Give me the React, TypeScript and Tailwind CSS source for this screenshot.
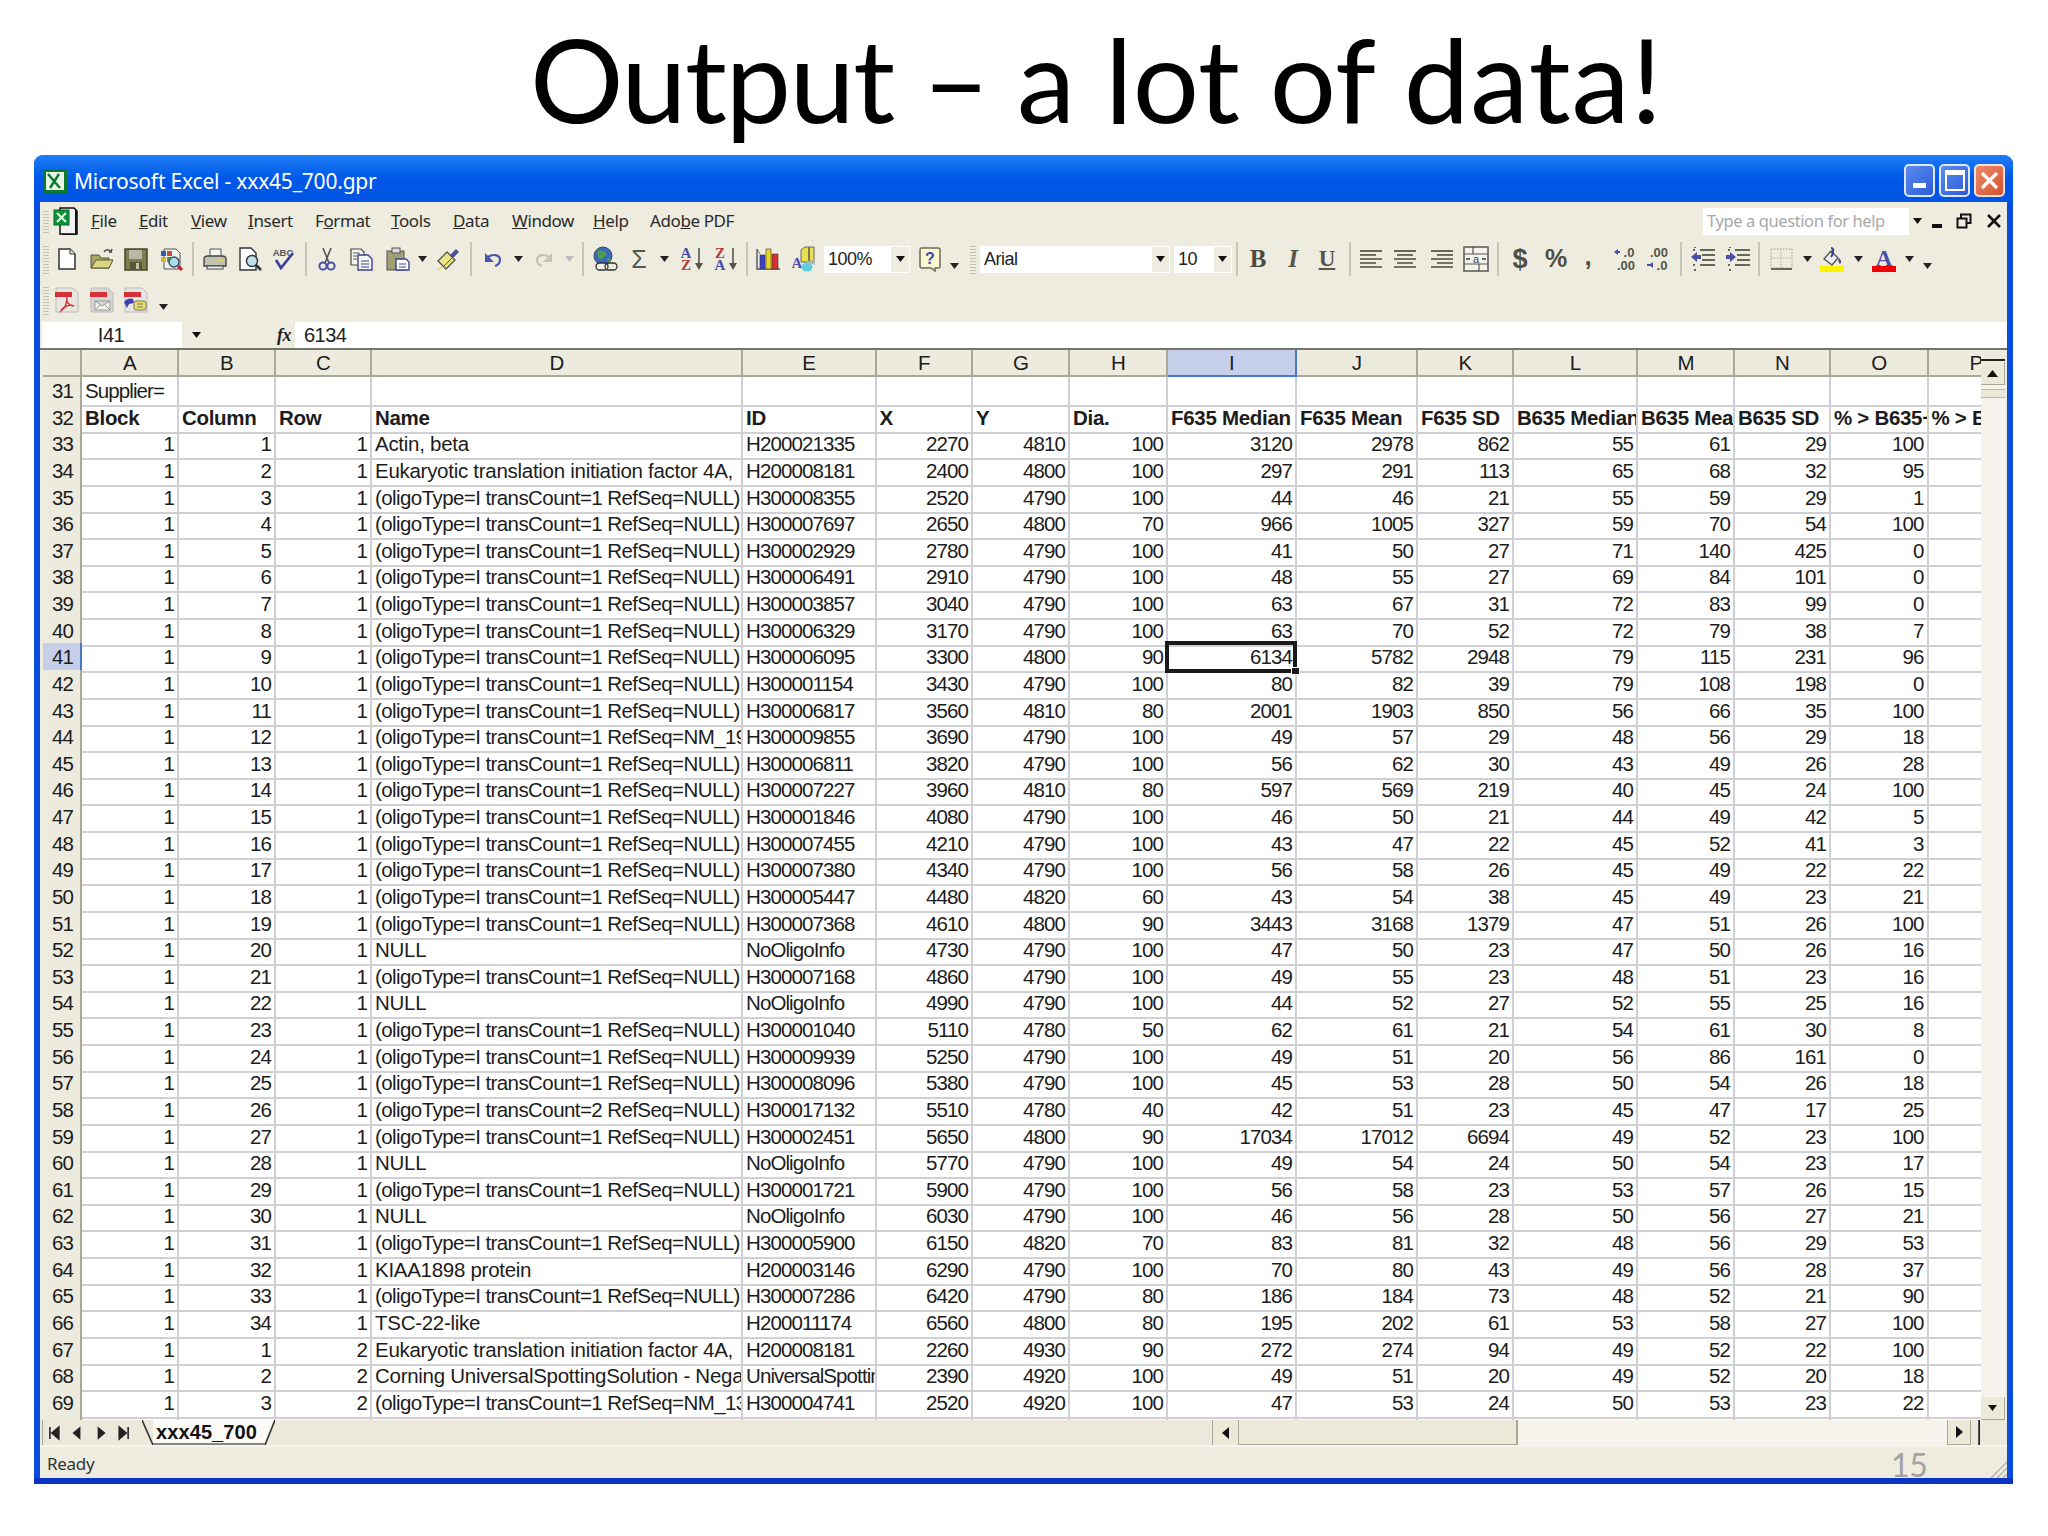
import React from "react";

const COLS = "grid grid-cols-[39px_97px_97px_96px_371px_133.5px_96.5px_97px_98px_129px_121px_96px_124px_97px_96px_97.5px_97px]";
const OL = "(oligoType=I transCount=1 RefSeq=NULL)";
const NM = "(oligoType=I transCount=1 RefSeq=NM_194603";
const EU = "Eukaryotic translation initiation factor 4A,";
const heads = ["A","B","C","D","E","F","G","H","I","J","K","L","M","N","O","P"];
const labels = ["Block","Column","Row","Name","ID","X","Y","Dia.","F635 Median","F635 Mean","F635 SD","B635 Median","B635 Mean","B635 SD","% > B635+1SD","% > B635+2SD"];

type R = [number, number, string, string, ...number[]];
const raw: R[] = [
  [1,1,"Actin, beta","H200021335",2270,4810,100,3120,2978,862,55,61,29,100],
  [2,1,EU,"H200008181",2400,4800,100,297,291,113,65,68,32,95],
  [3,1,OL,"H300008355",2520,4790,100,44,46,21,55,59,29,1],
  [4,1,OL,"H300007697",2650,4800,70,966,1005,327,59,70,54,100],
  [5,1,OL,"H300002929",2780,4790,100,41,50,27,71,140,425,0],
  [6,1,OL,"H300006491",2910,4790,100,48,55,27,69,84,101,0],
  [7,1,OL,"H300003857",3040,4790,100,63,67,31,72,83,99,0],
  [8,1,OL,"H300006329",3170,4790,100,63,70,52,72,79,38,7],
  [9,1,OL,"H300006095",3300,4800,90,6134,5782,2948,79,115,231,96],
  [10,1,OL,"H300001154",3430,4790,100,80,82,39,79,108,198,0],
  [11,1,OL,"H300006817",3560,4810,80,2001,1903,850,56,66,35,100],
  [12,1,NM,"H300009855",3690,4790,100,49,57,29,48,56,29,18],
  [13,1,OL,"H300006811",3820,4790,100,56,62,30,43,49,26,28],
  [14,1,OL,"H300007227",3960,4810,80,597,569,219,40,45,24,100],
  [15,1,OL,"H300001846",4080,4790,100,46,50,21,44,49,42,5],
  [16,1,OL,"H300007455",4210,4790,100,43,47,22,45,52,41,3],
  [17,1,OL,"H300007380",4340,4790,100,56,58,26,45,49,22,22],
  [18,1,OL,"H300005447",4480,4820,60,43,54,38,45,49,23,21],
  [19,1,OL,"H300007368",4610,4800,90,3443,3168,1379,47,51,26,100],
  [20,1,"NULL","NoOligoInfo",4730,4790,100,47,50,23,47,50,26,16],
  [21,1,OL,"H300007168",4860,4790,100,49,55,23,48,51,23,16],
  [22,1,"NULL","NoOligoInfo",4990,4790,100,44,52,27,52,55,25,16],
  [23,1,OL,"H300001040",5110,4780,50,62,61,21,54,61,30,8],
  [24,1,OL,"H300009939",5250,4790,100,49,51,20,56,86,161,0],
  [25,1,OL,"H300008096",5380,4790,100,45,53,28,50,54,26,18],
  [26,1,"(oligoType=I transCount=2 RefSeq=NULL)","H300017132",5510,4780,40,42,51,23,45,47,17,25],
  [27,1,OL,"H300002451",5650,4800,90,17034,17012,6694,49,52,23,100],
  [28,1,"NULL","NoOligoInfo",5770,4790,100,49,54,24,50,54,23,17],
  [29,1,OL,"H300001721",5900,4790,100,56,58,23,53,57,26,15],
  [30,1,"NULL","NoOligoInfo",6030,4790,100,46,56,28,50,56,27,21],
  [31,1,OL,"H300005900",6150,4820,70,83,81,32,48,56,29,53],
  [32,1,"KIAA1898 protein","H200003146",6290,4790,100,70,80,43,49,56,28,37],
  [33,1,OL,"H300007286",6420,4790,80,186,184,73,48,52,21,90],
  [34,1,"TSC-22-like","H200011174",6560,4800,80,195,202,61,53,58,27,100],
  [1,2,EU,"H200008181",2260,4930,90,272,274,94,49,52,22,100],
  [2,2,"Corning UniversalSpottingSolution - Negative","UniversalSpottingSolution",2390,4920,100,49,51,20,49,52,20,18],
  [3,2,"(oligoType=I transCount=1 RefSeq=NM_139049","H300004741",2520,4920,100,47,53,24,50,53,23,22],
];

const S = ({ children }: { children: React.ReactNode }) => (
  <svg width="26" height="26" viewBox="0 0 26 26" className="shrink-0 overflow-visible">{children}</svg>
);
const Tx = (p: { x: number; y: number; s: number; c: string; w?: number; f?: string; i?: boolean; children: React.ReactNode }) => (
  <text x={p.x} y={p.y} fontSize={p.s} fill={p.c} fontWeight={p.w ?? 400} fontFamily={p.f ?? "'Liberation Sans', sans-serif"} fontStyle={p.i ? "italic" : "normal"} textAnchor="middle">{p.children}</text>
);

const IconNew = () => <S><path d="M5 3h11l5 5v15H5z" fill="#fff" stroke="#333" strokeWidth="1.5" /><path d="M16 3v5h5" fill="#ddd" stroke="#333" /></S>;
const IconOpen = () => <S><path d="M2 22V9h8l2 3h8v10z" fill="#a8a763" stroke="#55552c" /><path d="M2 22l5-8h17l-4 8z" fill="#d9d583" stroke="#55552c" /><path d="M15 6c2-3 5-3 7 0l-2 0M22 6l1-3" fill="none" stroke="#444" strokeWidth="1.4" /></S>;
const IconSave = () => <S><rect x="2" y="3" width="22" height="21" fill="#7d7e4c" stroke="#44452a" strokeWidth="1.5" /><rect x="6" y="4" width="13" height="9" fill="#b8b8a8" /><rect x="7" y="16" width="12" height="8" fill="#55563a" /><rect x="13" y="17" width="3" height="6" fill="#c4c4a4" /></S>;
const IconPerm = () => <S><path d="M5 3h12l4 4v16H5z" fill="#f4f4ee" stroke="#555" /><rect x="2" y="5" width="5" height="5" fill="#3059b5" /><rect x="8" y="5" width="5" height="5" fill="#d24a3a" /><rect x="2" y="11" width="5" height="5" fill="#d8b030" /><rect x="8" y="11" width="5" height="5" fill="#4a9a4a" /><circle cx="15" cy="16" r="5" fill="#a5e0e8" stroke="#446" strokeWidth="1.4" /><path d="M19 20l4 4" stroke="#c02030" strokeWidth="3" /></S>;
const IconPrint = () => <S><path d="M8 3h11v8H8z" fill="#f6f6f0" stroke="#555" /><path d="M2 13c0-2 2-3 4-3h14c2 0 4 1 4 3v7H2z" fill="#c3c3b5" stroke="#444" strokeWidth="1.4" /><rect x="5" y="20" width="16" height="3" fill="#eee" stroke="#444" /><rect x="16" y="13" width="5" height="2" fill="#d8d050" /></S>;
const IconPreview = () => <S><path d="M3 2h11l5 5v17H3z" fill="#fff" stroke="#333" strokeWidth="1.4" /><circle cx="15" cy="15" r="5.5" fill="#bfe0ea" stroke="#333" strokeWidth="1.4" /><path d="M19 19l5 5" stroke="#333" strokeWidth="2.6" /></S>;
const IconSpell = () => <S><Tx x={12} y={10} s={9.5} c="#555" w={700}>ABC</Tx><path d="M5 14l5 8L22 7" fill="none" stroke="#3b3f97" strokeWidth="2.6" /></S>;
const IconCut = () => <S><path d="M9 2l6 15M17 2l-6 15" stroke="#555" strokeWidth="1.6" /><circle cx="9" cy="20" r="3.6" fill="none" stroke="#4a4fa5" strokeWidth="2" /><circle cx="17" cy="20" r="3.6" fill="none" stroke="#4a4fa5" strokeWidth="2" /></S>;
const IconCopy = () => <S><path d="M2 3h10l3 3v13H2z" fill="#f7f7f2" stroke="#444" strokeWidth="1.2" /><path d="M9 9h10l4 4v11H9z" fill="#f7f7f2" stroke="#3c418f" strokeWidth="1.4" /><path d="M12 15h8M12 18h8M12 21h8" stroke="#3c418f" /><path d="M4 7h7M4 10h4M4 13h4" stroke="#555" /></S>;
const IconPaste = () => <S><rect x="2" y="5" width="17" height="19" fill="#a0a074" stroke="#555" /><rect x="7" y="2" width="8" height="5" fill="#ddd" stroke="#555" /><path d="M11 13h10l3 3v8H11z" fill="#fff" stroke="#3c418f" strokeWidth="1.4" /><path d="M14 18h7M14 21h7" stroke="#3c418f" /></S>;
const IconPainter = () => <S><path d="M3 15l9-9 8 8-9 9z" fill="#eae48a" stroke="#55554a" strokeWidth="1.3" /><path d="M8 21l9-9" stroke="#55554a" /><path d="M15 9l6-6 3 3-6 6z" fill="#4a4e9f" /><path d="M2 24l5-3" stroke="#e8e270" strokeWidth="2" /></S>;
const IconUndo = () => <S><path d="M8 11c4-3 12-3 12 3 0 3-2 5-5 6" fill="none" stroke="#4a57a8" strokeWidth="2.2" /><path d="M5 7v9h9z" fill="#4a57a8" /></S>;
const IconRedo = () => <S><path d="M18 11c-4-3-12-3-12 3 0 3 2 5 5 6" fill="none" stroke="#c4c2b8" strokeWidth="2.2" /><path d="M21 7v9h-9z" fill="#c4c2b8" /></S>;
const IconLink = () => <S><circle cx="11" cy="10" r="9" fill="#3b67c0" stroke="#445" /><path d="M6 4c3 1 6 0 8 3s-3 4-4 7c-3-1-6-4-4-10zM15 12c3 0 4 1 4 2l-3 3z" fill="#4e9a50" /><rect x="4" y="17" width="12" height="7" rx="3.5" fill="#f0f0e8" stroke="#333" strokeWidth="1.3" /><rect x="13" y="17" width="12" height="7" rx="3.5" fill="none" stroke="#333" strokeWidth="1.3" /></S>;
const IconSigma = () => <S><Tx x={13} y={22} s={25} c="#55564a">Σ</Tx></S>;
const IconAZ = ({ flip }: { flip?: boolean }) => (
  <S>
    <Tx x={7} y={12} s={15} c={flip ? "#b23a3a" : "#4a4fa5"} w={700} f="'Liberation Serif', serif">{flip ? "Z" : "A"}</Tx>
    <Tx x={7} y={24} s={15} c={flip ? "#4a4fa5" : "#b23a3a"} w={700} f="'Liberation Serif', serif">{flip ? "A" : "Z"}</Tx>
    <path d="M20 2v17" stroke="#55564a" strokeWidth="1.6" /><path d="M16 17h8l-4 7z" fill="#55564a" />
  </S>
);
const IconChart = () => <S><path d="M1 3v20h23" fill="none" stroke="#555" strokeWidth="1.4" /><path d="M1 3l3 5" stroke="#777" /><rect x="4" y="9" width="5" height="14" fill="#3a40d0" stroke="#333" strokeWidth=".6" /><rect x="10" y="3" width="5" height="20" fill="#e8d820" stroke="#333" strokeWidth=".6" /><rect x="16" y="8" width="6" height="15" fill="#d83030" stroke="#333" strokeWidth=".6" /></S>;
const IconDraw = () => <S><path d="M10 4l4-3h9v15H10z" fill="#e8e050" stroke="#666" /><path d="M18 1v15" stroke="#7a7a40" strokeWidth="2" /><Tx x={6} y={22} s={15} c="#4a4fb0" w={700} f="'Liberation Serif', serif">A</Tx><ellipse cx="16" cy="21" rx="5.5" ry="4.5" fill="#5cd0e0" /><path d="M15 16l8-3 1 6z" fill="#aeb4a8" /></S>;
const IconHelp = () => <S><path d="M4 2h17c2 0 2 1 2 2v17c0 1-1 1-2 1h-3v3l-4-3H5c-1 0-2-1-2-2V4c0-1 0-2 1-2z" fill="#fbf9d0" stroke="#6b6b58" strokeWidth="1.5" /><Tx x={13} y={18} s={16} c="#4545b5" w={700}>?</Tx></S>;
const IconAlign = ({ a }: { a: "l" | "c" | "r" }) => {
  const short = a === "l" ? "M2 0h16" : a === "c" ? "M5 0h16" : "M8 0h16";
  return (
    <S>
      <g stroke="#66665a" strokeWidth="1.8">
        {[5, 13, 21].map((y) => <path key={y} transform={`translate(0 ${y})`} d="M2 0h22" />)}
        {[9, 17].map((y) => <path key={y} transform={`translate(0 ${y})`} d={short} />)}
      </g>
    </S>
  );
};
const IconMerge = () => <S><rect x="1" y="1" width="24" height="24" fill="#f4f3ea" stroke="#555" strokeWidth="1.5" /><path d="M1 8h24M1 18h24M10 1v7M16 18v7" stroke="#555" strokeWidth="1.2" /><Tx x={13} y={17} s={11} c="#444">a</Tx><path d="M3 13h4M23 13h-4" stroke="#333" strokeWidth="1.5" /></S>;
const IconInc = () => <S><path d="M2 6l4-3v6z" fill="#4a4fa5" /><path d="M5 6h3" stroke="#4a4fa5" strokeWidth="2" /><Tx x={17} y={11} s={13} c="#55564a" w={700}>.0</Tx><Tx x={14} y={24} s={13} c="#55564a" w={700}>.00</Tx></S>;
const IconDec = () => <S><Tx x={14} y={11} s={13} c="#55564a" w={700}>.00</Tx><path d="M8 19l-4-3v6z" transform="rotate(180 6 19)" fill="#4a4fa5" /><path d="M2 19h3" stroke="#4a4fa5" strokeWidth="2" /><Tx x={17} y={24} s={13} c="#55564a" w={700}>.0</Tx></S>;
const IconIndent = ({ out }: { out?: boolean }) => <S><g stroke="#66665a" strokeWidth="2"><path d="M10 4h15M12 9h13M12 14h13M10 19h15" /><path d="M3 4h4M3 19h4M5 23v2M5 1v1" strokeDasharray="2 2" /></g>{out ? <path d="M1 11l6-5v3h4v4H7v3z" fill="#4a4fa5" /> : <path d="M11 11l-6-5v3H1v4h4v3z" fill="#4a4fa5" />}</S>;
const IconBorders = () => <S><rect x="2" y="3" width="21" height="19" fill="none" stroke="#9b9b8a" strokeDasharray="1.5 1.5" /><path d="M12 3v19M2 12h21" stroke="#b0b09e" strokeDasharray="1.5 1.5" /><path d="M2 23h21" stroke="#66665a" strokeWidth="2" /></S>;
const IconFill = () => <S><path d="M5 13l7-8 7 7-6 7z" fill="#eee" stroke="#555" strokeWidth="1.4" /><path d="M12 2c3 0 3 5 0 9" fill="none" stroke="#3c418f" strokeWidth="2" /><path d="M20 12c2 2 3 4 1 6-2-2-2-4-1-6z" fill="#3c418f" /><rect x="1" y="20" width="24" height="6" fill="#fff200" /></S>;
const IconColor = () => <S><Tx x={13} y={20} s={23} c="#4a4fa5" w={700} f="'Liberation Serif', serif">A</Tx><rect x="1" y="20" width="24" height="6" fill="#f00000" /></S>;
const IconPdf = ({ k }: { k: 0 | 1 | 2 }) => (
  <S>
    <path d="M2 1h17l5 5v19H2z" fill={k === 1 ? "#d6d6d2" : "#e8e6de"} stroke="#bbb" />
    <rect x="1" y="5" width="17" height="5" fill="#d83038" />
    {k === 0 && <path d="M13 10c-1 5 1 8 7 9-6-2-11 1-13 5 3-2 6-7 6-14z" fill="none" stroke="#d83038" strokeWidth="1.4" />}
    {k === 1 && <path d="M6 14h15v9H6zM6 14l7 5 8-5M6 23l5-5M21 23l-5-5" fill="#f4f4f0" stroke="#999" />}
    {k === 2 && <g><path d="M1 15c3-4 7-4 9-3l1 4-5 1-2 4z" fill="#3c40b0" /><rect x="11" y="14" width="12" height="9" rx="2" fill="#e8e060" stroke="#777" /><path d="M14 17h6M14 20h6" stroke="#777" /></g>}
  </S>
);
const IconExcelDoc = () => (
  <svg width="28" height="28" viewBox="0 0 28 28" className="shrink-0">
    <path d="M8 1h14l3 3v23H8z" fill="#f2f2f2" stroke="#111" strokeWidth="1.5" />
    <path d="M24 3v25H10" fill="none" stroke="#111" strokeWidth="2" />
    <rect x="2" y="3" width="15" height="15" fill="#0f9138" stroke="#0a6a28" />
    <path d="M5 6l9 9M14 6l-9 9" stroke="#eaf7ea" strokeWidth="2" />
  </svg>
);
const IconExcelTitle = () => (
  <svg width="24" height="24" viewBox="0 0 24 24" className="shrink-0">
    <rect width="24" height="24" fill="#0a7a2e" />
    <rect x="3" y="3" width="18" height="18" fill="#e8f4e4" />
    <path d="M5 5l12 14M16 5L7 19" stroke="#0a7a2e" strokeWidth="2.4" />
  </svg>
);

const Caret = ({ c = "#111" }: { c?: string }) => (
  <svg width="9" height="6" viewBox="0 0 9 6" className="shrink-0"><path d="M0 0h9L4.5 6z" fill={c} /></svg>
);
const Sep = ({ className }: { className: string }) => (
  <div className={`${className} flex justify-center shrink-0`}><div className="w-[2px] h-[34px] bg-[#c6c4b6]" /></div>
);
const B = ({ className, children }: { className: string; children: React.ReactNode }) => (
  <div className={`${className} flex items-center justify-center shrink-0`}>{children}</div>
);
const Grip = ({ className }: { className: string }) => (
  <div className={`${className} w-[6px] h-[30px] shrink-0 bg-[repeating-linear-gradient(0deg,#c4c2b0_0_1px,transparent_1px_3px)]`} />
);
const Combo = ({ className, label, btn }: { className: string; label: string; btn: string }) => (
  <div className={`${className} h-[27px] bg-white flex items-center justify-between shrink-0 pl-[4px] pr-[1px] text-[18px] text-[#222] tracking-[-0.5px]`}>
    <span>{label}</span>
    <div className={`${btn} h-[25px] bg-[#eeecdf] flex items-center justify-center`}><Caret /></div>
  </div>
);

const Menu = ({ w, a, u, z }: { w: string; a: string; u: string; z: string }) => (
  <div className={`${w} shrink-0 text-[#2a2a2a]`}>{a}<span className="underline">{u}</span>{z}</div>
);

const Cell = ({ className, children }: { className: string; children?: React.ReactNode }) => (
  <div className={`${className} border-r-2 border-b-2 border-[#cfcfd4] px-[3px] overflow-hidden whitespace-nowrap leading-[28px]`}>{children}</div>
);

const ROWHEAD = "bg-[#edeade] border-r-2 border-b-2 border-[#aba898] text-center leading-[28px] pl-[2px]";

function Sheet() {
  return (
    <div className="w-[1938px] h-[1070px] overflow-hidden bg-white text-[20.5px] tracking-[-0.9px] text-[#1c1c1c]">
      <div className={`${COLS} h-[27px] bg-[#edeade]`}>
        <div className="border-r-2 border-b-2 border-[#aba898]" />
        {heads.map((h) => (
          <div key={h} className={h === "I" ? "border-r-2 border-b-2 border-r-[#4a78c4] border-b-[#4a78c4] bg-[#c5cfe9] text-center leading-[25px]" : "border-r-2 border-b-2 border-[#aba898] text-center leading-[25px]"}>{h}</div>
        ))}
      </div>
      <div className={`${COLS} h-[26.64px]`}>
        <div className={ROWHEAD}>31</div>
        <Cell className="">Supplier=</Cell>
        {heads.slice(1).map((h) => <Cell key={h} className="" />)}
      </div>
      <div className={`${COLS} h-[26.64px]`}>
        <div className={ROWHEAD}>32</div>
        {labels.map((l) => <Cell key={l} className="font-bold tracking-[-0.3px]">{l}</Cell>)}
      </div>
      {raw.map((r, i) => {
        const n = i + 33;
        const nums = r.slice(4) as number[];
        return (
          <div key={n} className={`${COLS} h-[26.64px]`}>
            <div className={n === 41 ? "bg-[#c5cfe9] border-r-2 border-b-2 border-r-[#4a78c4] border-b-[#aba898] text-center leading-[28px] pl-[2px]" : ROWHEAD}>{n}</div>
            <Cell className="text-right">1</Cell>
            <Cell className="text-right">{r[0]}</Cell>
            <Cell className="text-right">{r[1]}</Cell>
            <Cell className={r[2].startsWith("(") ? "tracking-[-0.58px]" : "tracking-[-0.28px]"}>{r[2]}</Cell>
            <Cell className="">{r[3]}</Cell>
            {nums.map((v, j) =>
              n === 41 && j === 3 ? (
                <div key={j} className="relative z-10 px-[3px] text-right leading-[28px] border-r-2 border-b-2 border-[#cfcfd4]">
                  {v}
                  <div className="absolute -left-[3px] -top-[2px] -bottom-[2px] -right-[2px] border-[4px] border-[#1a1a1a]" />
                  <div className="absolute -right-[5px] -bottom-[4px] w-[9px] h-[8px] bg-[#1a1a1a] border border-white" />
                </div>
              ) : (
                <Cell key={j} className="text-right">{v}</Cell>
              )
            )}
            <Cell className="" />
          </div>
        );
      })}
      <div className={`${COLS} h-[8px]`}>
        <div className="bg-[#edeade] border-r-2 border-[#aba898]" />
        {heads.map((h) => <div key={h} className="border-r-2 border-[#cfcfd4]" />)}
      </div>
    </div>
  );
}

export default function App() {
  return (
    <div className="w-[2048px] h-[1536px] bg-white overflow-hidden font-['Liberation_Sans',sans-serif]">
      <div className="h-[155px] pl-[530px] pt-[8px] font-['Lato',sans-serif] text-[117px] leading-[140px] text-black tracking-[-1.5px] whitespace-nowrap">
        Output – <span className="tracking-[0px]">a lot of </span><span className="tracking-[1px]">data!</span>
      </div>

      <div className="relative ml-[34px] w-[1979px] h-[1329px] flex flex-col rounded-t-[9px] overflow-hidden bg-[#0a4be0] border-b-[6px] border-b-[#0a35c4]">
        {/* title bar */}
        <div className="h-[47px] shrink-0 flex items-center pl-[9px] pr-[8px] pt-[4px] bg-linear-to-b from-[#1f7cf5] via-[#0058e8] to-[#0154e4]">
          <IconExcelTitle />
          <div className="ml-[7px] pt-[2px] text-[21px] text-white tracking-[-0.2px] font-['Noto_Sans',sans-serif]">Microsoft Excel - xxx45_700.gpr</div>
          <div className="ml-auto flex gap-[4px]">
            <div className="w-[31px] h-[33px] rounded-[5px] border-2 border-[#dfe8fb] bg-linear-to-br from-[#5d8bee] to-[#2b5bd8] flex items-end pl-[7px] pb-[7px]"><div className="w-[13px] h-[5px] bg-white" /></div>
            <div className="w-[31px] h-[33px] rounded-[5px] border-2 border-[#dfe8fb] bg-linear-to-br from-[#5d8bee] to-[#2b5bd8] flex items-center justify-center"><div className="w-[20px] h-[21px] border-2 border-t-[5px] border-white" /></div>
            <div className="w-[31px] h-[33px] rounded-[5px] border-2 border-[#f3e3dc] bg-linear-to-br from-[#ea8a6a] to-[#d8502c] flex items-center justify-center">
              <svg width="19" height="19" viewBox="0 0 19 19"><path d="M2 2l15 15M17 2L2 17" stroke="#fff" strokeWidth="3.4" /></svg>
            </div>
          </div>
        </div>

        <div className="flex-1 mx-[6px] bg-[#eeebdf] flex flex-col min-h-0">
          {/* menu */}
          <div className="h-[38px] shrink-0 flex items-center relative text-[17px] tracking-[-0.4px] font-['Noto_Sans',sans-serif]">
            <Grip className="ml-[3px] !h-[24px]" />
            <div className="ml-[3px] w-[39px] shrink-0"><IconExcelDoc /></div>
            <Menu w="w-[48px]" a="" u="F" z="ile" />
            <Menu w="w-[52px]" a="" u="E" z="dit" />
            <Menu w="w-[57px]" a="" u="V" z="iew" />
            <Menu w="w-[67px]" a="" u="I" z="nsert" />
            <Menu w="w-[76px]" a="F" u="o" z="rmat" />
            <Menu w="w-[62px]" a="" u="T" z="ools" />
            <Menu w="w-[59px]" a="" u="D" z="ata" />
            <Menu w="w-[81px]" a="" u="W" z="indow" />
            <Menu w="w-[57px]" a="" u="H" z="elp" />
            <Menu w="w-[90px]" a="Ado" u="b" z="e PDF" />
            <div className="ml-auto w-[223px] h-[27px] bg-white flex items-center justify-between pl-[4px] pr-[0px] text-[16.5px] text-[#a8a8a8] shrink-0">
              <span>Type a question for help</span>
              <div className="w-[17px] h-[27px] bg-[#eeecdf] flex items-center justify-center"><Caret /></div>
            </div>
            <div className="w-[81px] shrink-0 flex items-center pl-[6px] gap-[14px]">
              <div className="w-[10px] h-[4px] bg-[#111] mt-[10px]" />
              <svg width="16" height="16" viewBox="0 0 16 16"><path d="M5 5V1.5h9.5V10H11M1.5 5.5H10.5V14.5H1.5z" fill="none" stroke="#111" strokeWidth="2" /></svg>
              <svg width="16" height="16" viewBox="0 0 16 16"><path d="M2 2l12 12M14 2L2 14" stroke="#111" strokeWidth="2.6" /></svg>
            </div>
          </div>

          {/* toolbar 1 */}
          <div className="h-[38px] shrink-0 flex items-center">
            <Grip className="ml-[3px] mr-[1px]" />
            <B className="w-[34px]"><IconNew /></B>
            <B className="w-[36px]"><IconOpen /></B>
            <B className="w-[32px]"><IconSave /></B>
            <B className="w-[40px]"><IconPerm /></B>
            <Sep className="w-[2px]" />
            <B className="w-[42px]"><IconPrint /></B>
            <B className="w-[28px]"><IconPreview /></B>
            <B className="w-[40px]"><IconSpell /></B>
            <Sep className="w-[4px]" />
            <B className="w-[38px]"><IconCut /></B>
            <B className="w-[32px]"><IconCopy /></B>
            <B className="w-[40px]"><IconPaste /></B>
            <B className="w-[8px]"><Caret c="#222" /></B>
            <B className="w-[44px]"><IconPainter /></B>
            <Sep className="w-[2px]" />
            <B className="w-[42px]"><IconUndo /></B>
            <B className="w-[8px]"><Caret c="#222" /></B>
            <B className="w-[44px]"><IconRedo /></B>
            <B className="w-[6px]"><Caret c="#bbb" /></B>
            <Sep className="ml-[10px] w-[2px]" />
            <B className="w-[42px]"><IconLink /></B>
            <B className="w-[26px]"><IconSigma /></B>
            <B className="w-[24px]"><Caret c="#222" /></B>
            <B className="w-[32px]"><IconAZ /></B>
            <B className="w-[36px]"><IconAZ flip /></B>
            <Sep className="w-[6px]" />
            <B className="w-[38px]"><IconChart /></B>
            <B className="w-[32px]"><IconDraw /></B>
            <Combo className="ml-[4px] w-[86px]" label="100%" btn="w-[18px]" />
            <B className="ml-[2px] w-[36px]"><IconHelp /></B>
            <B className="w-[12px] pt-[14px]"><Caret c="#222" /></B>
            <Grip className="ml-[10px] mr-[4px]" />
            <Combo className="w-[190px]" label="Arial" btn="w-[17px]" />
            <Combo className="ml-[4px] w-[58px]" label="10" btn="w-[17px]" />
            <Sep className="w-[10px]" />
            <B className="w-[32px] font-['Liberation_Serif',serif] font-bold text-[25px] text-[#4a4a40]">B</B>
            <B className="w-[38px] font-['Liberation_Serif',serif] font-bold italic text-[25px] text-[#55554a]">I</B>
            <B className="w-[30px] font-['Liberation_Serif',serif] font-bold underline text-[23px] text-[#55554a]">U</B>
            <Sep className="w-[16px]" />
            <B className="w-[26px]"><IconAlign a="l" /></B>
            <B className="w-[42px]"><IconAlign a="c" /></B>
            <B className="w-[32px]"><IconAlign a="r" /></B>
            <B className="w-[36px]"><IconMerge /></B>
            <Sep className="w-[8px]" />
            <B className="w-[36px] font-bold text-[27px] text-[#4f4f44]">$</B>
            <B className="w-[36px] font-bold text-[25px] text-[#4f4f44]">%</B>
            <B className="w-[28px] font-bold text-[26px] text-[#4f4f44] pb-[6px]">,</B>
            <B className="ml-[6px] w-[34px]"><IconInc /></B>
            <B className="w-[32px]"><IconDec /></B>
            <Sep className="w-[14px]" />
            <B className="w-[30px]"><IconIndent out /></B>
            <B className="w-[40px]"><IconIndent /></B>
            <Sep className="w-[2px]" />
            <B className="w-[44px]"><IconBorders /></B>
            <B className="w-[6px]"><Caret c="#222" /></B>
            <B className="w-[44px]"><IconFill /></B>
            <B className="w-[8px]"><Caret c="#222" /></B>
            <B className="w-[44px]"><IconColor /></B>
            <B className="w-[6px]"><Caret c="#222" /></B>
            <B className="w-[30px] pt-[14px]"><Caret c="#222" /></B>
          </div>

          {/* toolbar 2 */}
          <div className="h-[44px] shrink-0 flex items-center">
            <Grip className="ml-[3px] mr-[1px]" />
            <B className="w-[34px]"><IconPdf k={0} /></B>
            <B className="w-[36px]"><IconPdf k={1} /></B>
            <B className="w-[32px]"><IconPdf k={2} /></B>
            <B className="w-[22px] pt-[14px]"><Caret c="#222" /></B>
          </div>

          {/* formula bar */}
          <div className="h-[26px] shrink-0 flex items-center text-[20px] text-[#222] tracking-[-0.5px]">
            <div className="ml-[2px] w-[140px] h-full bg-white text-center leading-[26px] pr-[2px]">I41</div>
            <B className="w-[28px]"><Caret /></B>
            <div className="w-[85px] text-right pr-[4px] font-['Liberation_Serif',serif] italic font-bold text-[18px] leading-[26px]">fx</div>
            <div className="flex-1 h-full bg-white pl-[9px] leading-[26px]">6134</div>
          </div>
          <div className="h-[2px] shrink-0 bg-[#74746a]" />

          {/* sheet */}
          <div className="flex shrink-0 pl-[3px]">
            <Sheet />
            <div className="w-[24px] h-[1070px] bg-[#f5f3ec] flex flex-col">
              <div className="h-[12px] bg-[#edeade] shrink-0"><div className="mt-[9px] h-[2px] bg-[#222]" /></div>
              <div className="h-[23px] shrink-0 bg-[#ece9d8] border-r border-b border-[#aba898] flex items-center justify-center"><svg width="11" height="7" viewBox="0 0 11 7"><path d="M5.5 0l5.5 7H0z" fill="#111" /></svg></div>
              <div className="mt-[4px] h-[9px] shrink-0 bg-[#ece9d8] border-y border-[#bcb9a8]" />
              <div className="flex-1" />
              <div className="h-[23px] shrink-0 bg-[#ece9d8] border-r border-b border-[#aba898] flex items-center justify-center"><Caret /></div>
            </div>
          </div>

          {/* tabs + scrollbar */}
          <div className="h-[27px] shrink-0 flex items-stretch bg-[#ece9dc] border-b-2 border-[#f6f4ec]">
            <div className="w-[100px] ml-[2px] shrink-0 flex items-center border-l border-[#aba898] text-[#222]">
              <svg width="100" height="16" viewBox="0 0 100 16"><path d="M7 2v12M16 2l-7 6 7 6zM37 3l-6 5 6 5zM56 3l6 5-6 5zM77 2l7 6-7 6zM86 2v12" fill="#222" stroke="#222" strokeWidth="1.6" /></svg>
            </div>
            <div className="w-[133px] shrink-0 flex items-stretch">
              <svg width="11" height="25" viewBox="0 0 11 25" className="shrink-0"><path d="M0 0l11 25H0z" fill="#ece9dc" /><path d="M0 0l11 25" stroke="#333" strokeWidth="1.6" fill="none" /></svg>
              <div className="w-[112px] h-[25px] bg-[#fbfaf6] border-b-2 border-[#888] pl-[3px] font-bold text-[20px] tracking-[0.1px] text-[#111] leading-[24px]">xxx45_700</div>
              <svg width="10" height="25" viewBox="0 0 10 25" className="shrink-0"><path d="M0 0h10L0 25z" fill="#fbfaf6" /><path d="M10 0L0 25" stroke="#333" strokeWidth="1.6" fill="none" /></svg>
            </div>
            <div className="w-[937px] shrink-0" />
            <div className="w-[27px] shrink-0 bg-[#ece9d8] border-x border-[#aba898] flex items-center justify-center"><svg width="7" height="12" viewBox="0 0 7 12"><path d="M7 0v12L0 6z" fill="#111" /></svg></div>
            <div className="w-[279px] shrink-0 bg-[#ece9d8] border-r-2 border-b border-[#aba898]" />
            <div className="w-[429px] shrink-0 bg-[#f5f3ec]" />
            <div className="w-[24px] shrink-0 bg-[#ece9d8] border-x border-b border-[#aba898] flex items-center justify-center"><svg width="7" height="12" viewBox="0 0 7 12"><path d="M0 0v12l7-6z" fill="#111" /></svg></div>
            <div className="w-[8px] shrink-0 border-r border-[#555]" />
            <div className="w-[24px] shrink-0 border-l border-[#222]" />
          </div>

          {/* status */}
          <div className="flex-1 flex items-center relative pl-[7px] pt-[3px] text-[17px] tracking-[-0.3px] text-[#333] font-['Noto_Sans',sans-serif]">
            Ready
            <svg width="18" height="18" viewBox="0 0 18 18" className="absolute right-0 bottom-0"><path d="M18 2L2 18M18 8L8 18M18 14l-4 4" stroke="#b8b5a4" strokeWidth="1.5" /></svg>
            <div className="absolute left-[1851px] top-0 font-['Lato',sans-serif] text-[32px] leading-[36px] text-[#a2a2a2]">15</div>
          </div>
        </div>
      </div>
    </div>
  );
}
